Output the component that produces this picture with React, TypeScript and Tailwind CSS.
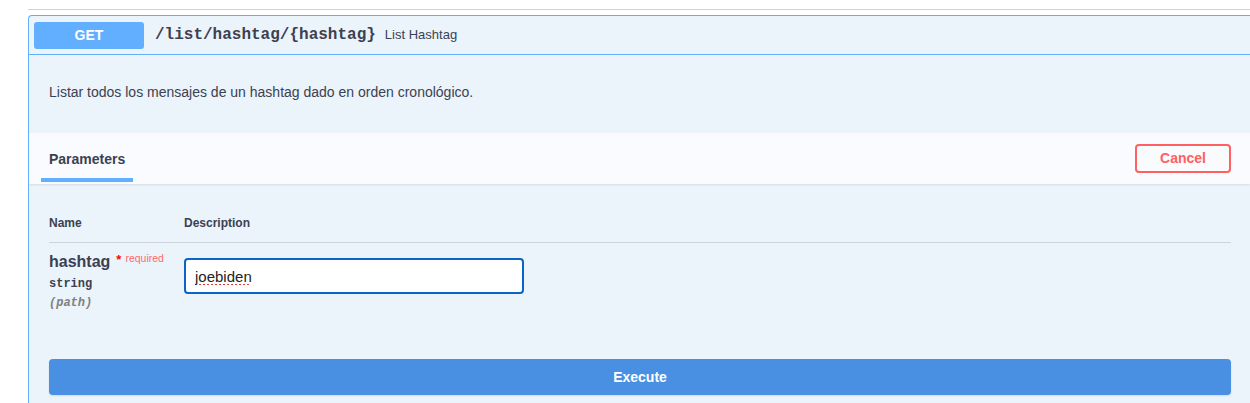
import { useState } from 'react';

const sans = 'font-["Liberation_Sans",Arial,sans-serif]';
const mono = 'font-["Liberation_Mono","Courier_New",monospace]';

function ParamRow({
  name,
  type,
  location,
  value,
  onChange,
}: {
  name: string;
  type: string;
  location: string;
  value: string;
  onChange: (v: string) => void;
}) {
  return (
    <div className="flex items-start pt-[15px]">
      {/* Name column */}
      <div className="w-[135px] shrink-0 mt-[-6px]">
        <div className="flex items-start text-[#3b4151]">
          <span className="text-[16px] font-bold leading-[20px]">{name}</span>
          <span className="ml-[6px] text-[13px] font-bold text-[#ff0000] leading-[16px]">*</span>
          <span className="ml-[4px] text-[10.5px] text-[#ff6a6a] leading-[12px]">required</span>
        </div>
        <div className={`${mono} mt-[4px] text-[12px] font-bold text-[#3b4151] leading-[16px]`}>
          {type}
        </div>
        <div className={`${mono} mt-[3px] text-[12px] italic font-bold text-[#808080] leading-[16px]`}>
          ({location})
        </div>
      </div>

      {/* Description column */}
      <div className="flex-1">
        <input
          value={value}
          onChange={(e) => onChange(e.target.value)}
          spellCheck
          className="w-[340px] h-[36px] rounded-[4px] border-2 border-[#0b64c8] bg-white px-[9px] text-[15px] text-[#222] outline-none underline decoration-dotted decoration-[#e23b3b] decoration-2 underline-offset-[3px]"
        />
      </div>
    </div>
  );
}

export default function App() {
  const [hashtag, setHashtag] = useState('joebiden');

  return (
    <div className={`${sans} min-h-screen bg-white pt-[9px] pl-[28px]`}>
      {/* previous operation's bottom edge */}
      <div className="border-t border-[#d2d2d2]" />

      <div className="mt-[5px] h-[389px] rounded-tl-[4px] border-l border-t border-[#61affe] bg-[#ebf3fb] overflow-hidden">
        {/* Summary */}
        <div className="flex items-center h-[39px] border-b border-[#61affe] px-[5px]">
          <span className="flex items-center justify-center w-[110px] h-[27px] rounded-[3px] bg-[#61affe] text-[14px] font-bold text-white">
            GET
          </span>
          <span className={`${mono} ml-[11px] text-[16px] font-bold text-[#3b4151]`}>
            /list/hashtag/&#123;hashtag&#125;
          </span>
          <span className="ml-[9px] text-[13px] text-[#3b4151]">List Hashtag</span>
        </div>

        {/* Description */}
        <div className="flex items-center h-[78px] px-[20px] pb-[4px] text-[14px] text-[#3b4151]">
          Listar todos los mensajes de un hashtag dado en orden cronológico.
        </div>

        {/* Parameters header */}
        <div className="flex items-center justify-between h-[51px] bg-[#f9fbfe] pl-[12px] pr-[19px] shadow-[0_1px_2px_rgba(0,0,0,0.1)]">
          <div className="relative h-full flex items-center">
            <span className="px-[8px] pt-[2px] text-[14px] font-bold text-[#3b4151]">
              Parameters
            </span>
            <span className="absolute left-0 bottom-[2px] h-[4px] w-[92px] bg-[#61affe]" />
          </div>
          <button
            type="button"
            className="w-[96px] h-[29px] rounded-[4px] border-2 border-[#ff6060] bg-transparent text-[14px] font-bold text-[#ff6060]"
          >
            Cancel
          </button>
        </div>

        {/* Parameters table */}
        <div className="px-[20px] pt-[30px] pr-[19px]">
          <div className="flex border-b border-[#cdd3dc] pb-[10px] text-[12px] font-bold text-[#3b4151]">
            <span className="w-[135px]">Name</span>
            <span>Description</span>
          </div>
          <ParamRow
            name="hashtag"
            type="string"
            location="path"
            value={hashtag}
            onChange={setHashtag}
          />
        </div>

        {/* Execute */}
        <div className="px-[20px] pr-[19px] pt-[48px]">
          <button
            type="button"
            className="w-full h-[36px] rounded-[4px] bg-[#4990e2] text-[14px] font-bold text-white shadow-[0_1px_2px_rgba(0,0,0,0.1)]"
          >
            Execute
          </button>
        </div>
      </div>
    </div>
  );
}
